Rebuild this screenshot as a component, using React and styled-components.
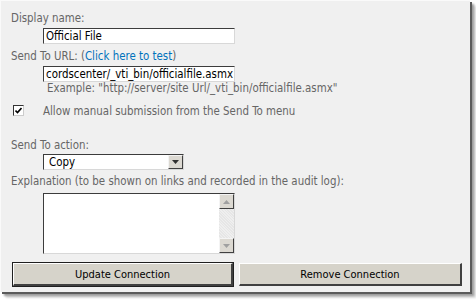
import React from "react";
import styled, { createGlobalStyle } from "styled-components";

const Global = createGlobalStyle`
  html, body { margin: 0; padding: 0; background: #ffffff; }
  body { width: 476px; height: 300px; overflow: hidden; }
`;

const Frame = styled.div`
  width: 470px;
  height: 292px;
  box-sizing: border-box;
  padding: 10px 0 0 10px;
  background: #f0f0f0;
  border-left: 1px solid #fafafa;
  border-top: 1px solid #fafafa;
  box-shadow: 2px 2px 0 #5a5a5a, 4px 4px 2px #9a9a9a, 6px 6px 2px #dcdcdc;
  font-family: "DejaVu Sans Condensed", "DejaVu Sans", sans-serif;
  font-size: 11.4px;
  color: #666666;
`;

const Label = styled.div`
  height: 13px;
  line-height: 13px;
  margin-top: ${(p) => p.$mt || 0}px;
  white-space: nowrap;
`;

const Link = styled.span`
  color: #0072bc;
`;

const Indent = styled.div`
  padding-left: 32px;
  margin-top: ${(p) => p.$mt || 0}px;
`;

const TextBox = styled.div`
  width: 192px;
  height: 16px;
  box-sizing: border-box;
  background: #ffffff;
  border-top: 1px solid #3c3c3c;
  border-left: 1px solid #3c3c3c;
  border-right: 1px solid #d8d8d8;
  border-bottom: 1px solid #d8d8d8;
  color: #000000;
  line-height: 14px;
  padding-left: 2px;
  white-space: nowrap;
  overflow: hidden;
`;

const Example = styled.div`
  padding-left: 4px;
  line-height: 13px;
  white-space: nowrap;
`;

const CheckRow = styled.div`
  display: flex;
  align-items: center;
  margin-top: 9px;
  height: 13px;
`;

const Check = styled.div`
  width: 11px;
  height: 11px;
  box-sizing: border-box;
  margin-left: 2px;
  margin-right: 19px;
  background: #fff;
  border-top: 1px solid #333;
  border-left: 1px solid #333;
  border-right: 1px solid #ccc;
  border-bottom: 1px solid #ccc;
  display: flex;
  align-items: center;
  justify-content: center;
`;

const Select = styled.div`
  width: 141px;
  height: 16px;
  box-sizing: border-box;
  background: #fff;
  border-top: 1px solid #3c3c3c;
  border-left: 1px solid #3c3c3c;
  border-right: 1px solid #d8d8d8;
  border-bottom: 1px solid #d8d8d8;
  display: flex;
  color: #000;
  line-height: 14px;
`;

const SelectText = styled.div`
  flex: 1;
  padding-left: 5px;
`;

const ArrowBtn = styled.div`
  width: 15px;
  height: 14px;
  box-sizing: border-box;
  background: #dcd9d2;
  border-top: 1px solid #f4f4f4;
  border-left: 1px solid #f4f4f4;
  border-right: 1px solid #404040;
  border-bottom: 1px solid #404040;
  display: flex;
  align-items: center;
  justify-content: center;
`;

const TextArea = styled.div`
  width: 192px;
  height: 61px;
  box-sizing: border-box;
  background: #fff;
  border-top: 1px solid #3c3c3c;
  border-left: 1px solid #3c3c3c;
  border-right: 1px solid #d8d8d8;
  border-bottom: 1px solid #d8d8d8;
  display: flex;
  justify-content: flex-end;
`;

const ScrollBar = styled.div`
  width: 15px;
  display: flex;
  flex-direction: column;
  justify-content: space-between;
  background: repeating-linear-gradient(45deg, #e6e6e6 0 1px, #efefef 1px 2px);
`;

const ScrollBtn = styled(ArrowBtn)`
  height: 15px;
`;

const Buttons = styled.div`
  display: flex;
  gap: 6px;
  margin-top: 9px;
  margin-left: 2px;
`;

const Button = styled.div`
  width: ${(p) => p.$w}px;
  height: 23px;
  box-sizing: border-box;
  background: #d6d3ca;
  border-top: 1px solid #ffffff;
  border-left: 1px solid #ffffff;
  border-right: 2px solid #404040;
  border-bottom: 2px solid #404040;
  outline: ${(p) => (p.$default ? "1px solid #202020" : "none")};
  display: flex;
  align-items: center;
  justify-content: center;
  color: #000;
  font-size: 11px;
`;

const Tri = () => (
  <svg width="7" height="4" viewBox="0 0 7 4">
    <path d="M0 0 L7 0 L3.5 4 Z" fill="#303030" />
  </svg>
);

const TriGrey = ({ up }) => (
  <svg width="7" height="4" viewBox="0 0 7 4">
    <path d={up ? "M0 4 L3.5 0 L7 4 Z" : "M0 0 L7 0 L3.5 4 Z"} fill="#a0a0a0" />
  </svg>
);

export default function App() {
  return (
    <>
      <Global />
      <Frame>
        <Label $mt={1}>Display name:</Label>
        <Indent $mt={3}>
          <TextBox>Official File</TextBox>
        </Indent>
        <Label $mt={6}>
          Send To URL: (<Link>Click here to test</Link>)
        </Label>
        <Indent $mt={3}>
          <TextBox>cordscenter/_vti_bin/officialfile.asmx</TextBox>
          <Example>Example: "http://server/site Url/_vti_bin/officialfile.asmx"</Example>
        </Indent>
        <CheckRow>
          <Check>
            <svg width="7" height="7" viewBox="0 0 7 7">
              <path d="M0.5 3.5 L2.5 5.5 L6.5 1" stroke="#000" strokeWidth="1.6" fill="none" />
            </svg>
          </Check>
          <span>Allow manual submission from the Send To menu</span>
        </CheckRow>
        <Label $mt={22}>Send To action:</Label>
        <Indent $mt={2}>
          <Select>
            <SelectText>Copy</SelectText>
            <ArrowBtn>
              <Tri />
            </ArrowBtn>
          </Select>
        </Indent>
        <Label $mt={5}>Explanation (to be shown on links and recorded in the audit log):</Label>
        <Indent $mt={5}>
          <TextArea>
            <ScrollBar>
              <ScrollBtn>
                <TriGrey up />
              </ScrollBtn>
              <ScrollBtn>
                <TriGrey />
              </ScrollBtn>
            </ScrollBar>
          </TextArea>
        </Indent>
        <Buttons>
          <Button $w={220} $default>Update Connection</Button>
          <Button $w={223}>Remove Connection</Button>
        </Buttons>
      </Frame>
    </>
  );
}
